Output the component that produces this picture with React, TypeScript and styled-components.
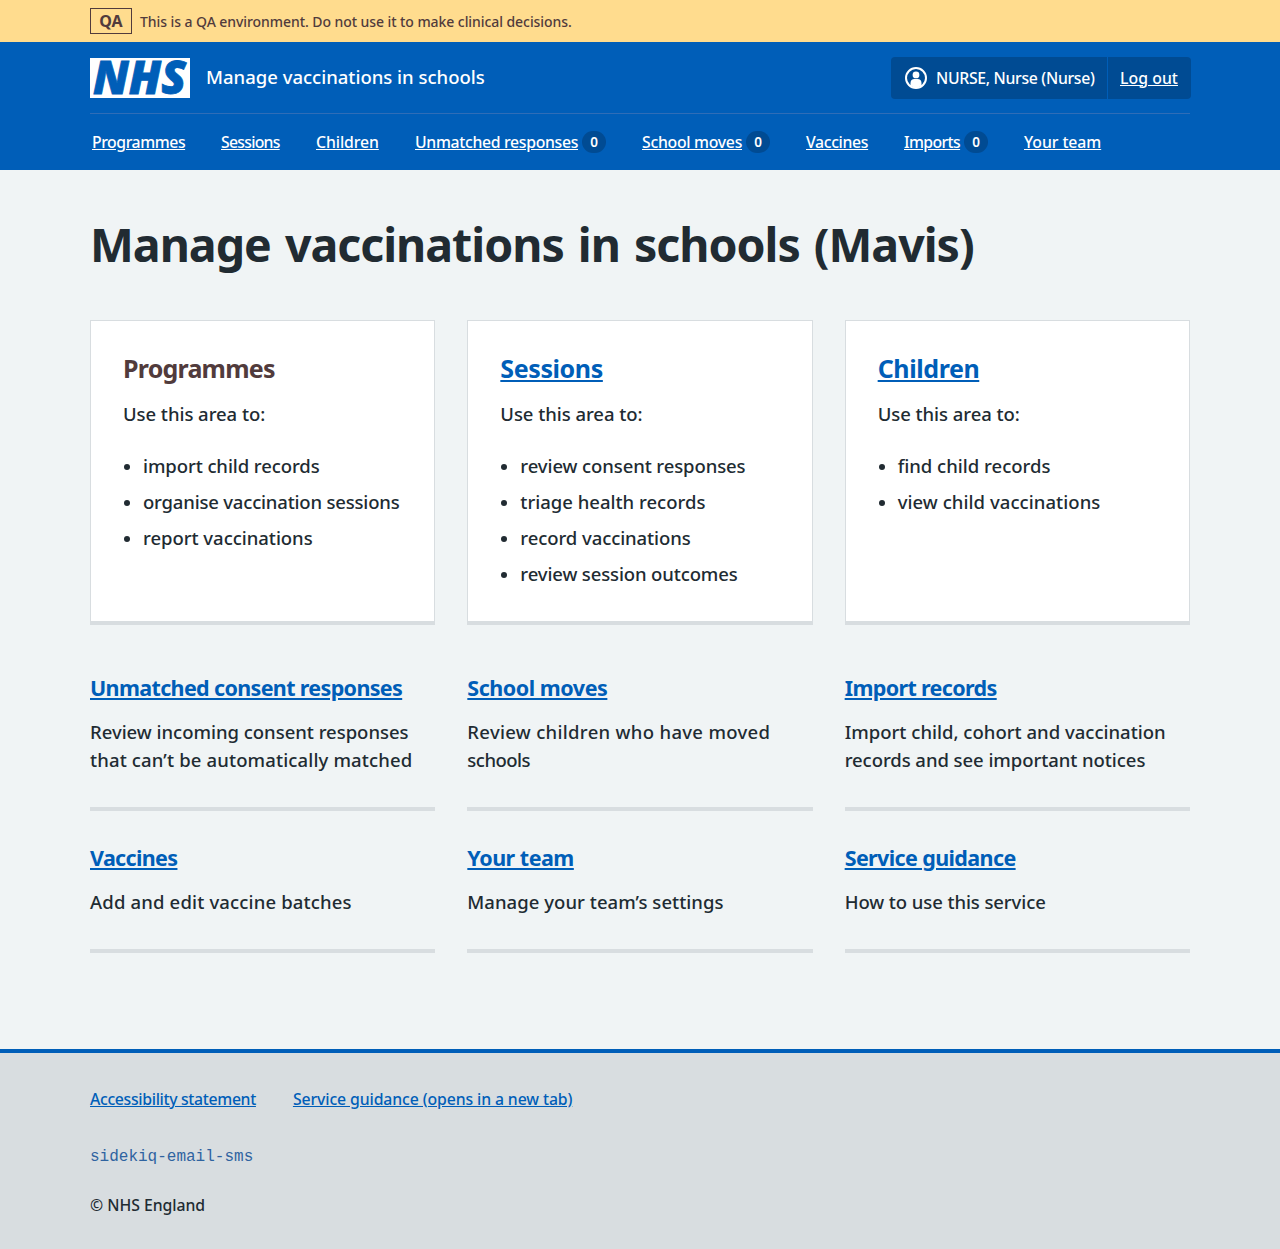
import React from "react";
import styled, { createGlobalStyle } from "styled-components";

const colors = {
  blue: "#005eb8",
  darkBlue: "#004b93",
  text: "#212b32",
  brown: "#513b3c",
  page: "#f0f4f5",
  grey: "#d8dde0",
  amber: "#ffdc8e",
};

const GlobalStyle = createGlobalStyle`
  *, *::before, *::after { box-sizing: border-box; }
  body {
    margin: 0;
    background: ${colors.grey};
    color: ${colors.text};
    font-family: "Noto Sans", "Open Sans", Arial, sans-serif;
    font-size: 18.5px;
    font-weight: 500;
    line-height: 28px;
  }
  h1, h2, p, ul { margin: 0; padding: 0; }
`;

const Container = styled.div`
  width: 1100px;
  margin: 0 auto;
`;

const Spaced = styled.span<{ $ls?: number }>`
  letter-spacing: ${(p) => p.$ls ?? 0}px;
  white-space: nowrap;
`;

const Banner = styled.div`
  height: 42px;
  background: ${colors.amber};
  color: ${colors.brown};
`;

const BannerInner = styled(Container)`
  display: flex;
  align-items: center;
  gap: 8px;
  height: 42px;
  font-size: 14px;
  line-height: 24px;
`;

const BannerText = styled.span`
  padding-top: 2px;
`;

const Tag = styled.strong`
  width: 42px;
  height: 26px;
  border: 1px solid ${colors.brown};
  font-size: 16px;
  font-weight: 700;
  line-height: 24px;
  text-align: center;
`;

const Header = styled.header`
  height: 128px;
  background: ${colors.blue};
  color: #fff;
`;

const HeaderTop = styled(Container)`
  display: flex;
  align-items: center;
  height: 72px;
  border-bottom: 1px solid #2f6db7;
`;

const Logo = styled.svg`
  display: block;
  width: 100px;
  height: 40px;
  overflow: visible;
  background: #fff;
`;

const LogoText = styled.text`
  fill: ${colors.blue};
  stroke: ${colors.blue};
  stroke-width: 0.8px;
  font-family: "Open Sans", "Noto Sans", sans-serif;
  font-size: 46px;
  font-style: italic;
  font-weight: 800;
`;

const ServiceName = styled.span`
  flex: 1;
  margin-left: 16px;
  padding-bottom: 1px;
`;

const Account = styled.div`
  display: flex;
  width: 300px;
  height: 42px;
  margin-right: -1px;
  border-radius: 4px;
  background: ${colors.darkBlue};
  font-size: 15.8px;
  line-height: 42px;
`;

const AccountUser = styled.div`
  display: flex;
  align-items: center;
  gap: 8px;
  width: 217px;
  padding-left: 13px;
  border-right: 1px solid ${colors.blue};
`;

const LogOut = styled.a`
  padding-left: 12px;
  color: #fff;
  text-decoration: underline;
`;

const Nav = styled.nav`
  display: flex;
  align-items: center;
  gap: 36px;
  height: 56px;
  padding-left: 2px;
  font-size: 15.8px;
  line-height: 24px;
`;

const NavItem = styled.div<{ $width: number }>`
  display: flex;
  align-items: center;
  justify-content: space-between;
  width: ${(p) => p.$width}px;
`;

const NavLink = styled.a`
  color: #fff;
  text-decoration: underline;
`;

const Count = styled.span`
  width: 24px;
  height: 22px;
  border-radius: 12px;
  background: ${colors.darkBlue};
  font-size: 13.5px;
  font-weight: 600;
  line-height: 23px;
  text-align: center;
`;

const Main = styled.main`
  height: 879px;
  padding-top: 39px;
  background: ${colors.page};
`;

const PageTitle = styled.h1`
  margin-bottom: 41px;
  font-size: 46.5px;
  font-weight: 700;
  line-height: 70px;
  word-spacing: 3px;
`;

const Grid = styled.div`
  display: grid;
  grid-template-columns: repeat(3, 1fr);
  column-gap: 32px;
  row-gap: 32px;
`;

const CardGrid = styled(Grid)`
  margin-bottom: 48px;
`;

const Card = styled.section`
  height: 305px;
  padding: 32px;
  border: 1px solid ${colors.grey};
  border-bottom-width: 4px;
  background: #fff;
`;

const CardTitle = styled.h2`
  margin-bottom: 16px;
  color: ${colors.brown};
  font-size: 25px;
  font-weight: 700;
  line-height: 31px;
`;

const Link = styled.a`
  color: ${colors.blue};
  text-decoration: underline;
`;

const List = styled.ul`
  margin-top: 24px;
  list-style: none;
`;

const Item = styled.li`
  display: flex;
  align-items: center;
  margin-bottom: 8px;

  &::before {
    content: "";
    width: 6px;
    height: 6px;
    margin: 2px 13px 0 1px;
    border-radius: 50%;
    background: ${colors.text};
  }
`;

const Tile = styled.section`
  padding-bottom: 33px;
  border-bottom: 4px solid ${colors.grey};
`;

const TileTitle = styled.h2`
  margin-bottom: 16px;
  font-size: 21.5px;
  font-weight: 700;
  line-height: 29px;
`;

const Footer = styled.footer`
  height: 200px;
  padding-top: 34px;
  border-top: 4px solid ${colors.blue};
  background: ${colors.grey};
  font-size: 15.8px;
  line-height: 24px;
`;

const FooterLinks = styled.div`
  display: flex;
  gap: 37px;
  margin-bottom: 34px;
`;

const Code = styled.code`
  display: block;
  margin-bottom: 24px;
  color: #2f63a0;
  font-family: "Liberation Mono", monospace;
  font-size: 16px;
  font-weight: 400;
`;

type Line = [string, number];

const navItems: { label: Line; width: number; count?: number }[] = [
  { label: ["Programmes", -0.44], width: 93 },
  { label: ["Sessions", -0.74], width: 59 },
  { label: ["Children", -0.1], width: 63 },
  { label: ["Unmatched responses", -0.32], width: 191, count: 0 },
  { label: ["School moves", -0.28], width: 128, count: 0 },
  { label: ["Vaccines", -0.34], width: 62 },
  { label: ["Imports", -0.62], width: 84, count: 0 },
  { label: ["Your team", -0.08], width: 77 },
];

const cards: { title: Line; plain?: boolean; items: Line[] }[] = [
  {
    title: ["Programmes", -0.78],
    plain: true,
    items: [
      ["import child records", -0.09],
      ["organise vaccination sessions", -0.19],
      ["report vaccinations", -0.03],
    ],
  },
  {
    title: ["Sessions", -0.4],
    items: [
      ["review consent responses", -0.1],
      ["triage health records", 0],
      ["record vaccinations", -0.08],
      ["review session outcomes", -0.13],
    ],
  },
  {
    title: ["Children", -0.41],
    items: [
      ["find child records", 0],
      ["view child vaccinations", 0.06],
    ],
  },
];

const tiles: { title: Line; lines: Line[] }[] = [
  {
    title: ["Unmatched consent responses", -0.65],
    lines: [
      ["Review incoming consent responses", -0.02],
      ["that can’t be automatically matched", 0.14],
    ],
  },
  {
    title: ["School moves", -0.47],
    lines: [
      ["Review children who have moved", 0.31],
      ["schools", -0.5],
    ],
  },
  {
    title: ["Import records", -0.64],
    lines: [
      ["Import child, cohort and vaccination", 0.01],
      ["records and see important notices", -0.06],
    ],
  },
  { title: ["Vaccines", -0.65], lines: [["Add and edit vaccine batches", 0.16]] },
  { title: ["Your team", -0.5], lines: [["Manage your team’s settings", 0.04]] },
  { title: ["Service guidance", -0.62], lines: [["How to use this service", -0.09]] },
];

const UserIcon = () => (
  <svg width="24" height="24" viewBox="0 0 24 24" fill="none">
    <circle cx="12" cy="12" r="10" stroke="#fff" strokeWidth="2" />
    <circle cx="12" cy="8.9" r="3.4" fill="#fff" />
    <path
      d="M6.5 19.5v-2.6c0-2.4 1.6-3.9 3.9-3.9h3.2c2.3 0 3.9 1.5 3.9 3.9v2.6c-1.5 1.2-3.3 1.9-5.5 1.9s-4-.7-5.5-1.9z"
      fill="#fff"
    />
  </svg>
);

export default function App() {
  return (
    <>
      <GlobalStyle />
      <Banner>
        <BannerInner>
          <Tag>QA</Tag>
          <BannerText>
            <Spaced $ls={-0.07}>
              This is a QA environment. Do not use it to make clinical decisions.
            </Spaced>
          </BannerText>
        </BannerInner>
      </Banner>
      <Header>
        <HeaderTop>
          <Logo viewBox="0 0 100 40" aria-label="NHS">
            <LogoText x="3" y="36.3" textLength="93" lengthAdjust="spacingAndGlyphs">
              NHS
            </LogoText>
          </Logo>
          <ServiceName>
            <Spaced $ls={0}>Manage vaccinations in schools</Spaced>
          </ServiceName>
          <Account>
            <AccountUser>
              <UserIcon />
              <Spaced $ls={-0.32}>NURSE, Nurse (Nurse)</Spaced>
            </AccountUser>
            <LogOut>
              <Spaced $ls={0.05}>Log out</Spaced>
            </LogOut>
          </Account>
        </HeaderTop>
        <Container>
          <Nav>
            {navItems.map(({ label, width, count }) => (
              <NavItem key={label[0]} $width={width}>
                <NavLink>
                  <Spaced $ls={label[1]}>{label[0]}</Spaced>
                </NavLink>
                {count !== undefined && <Count>{count}</Count>}
              </NavItem>
            ))}
          </Nav>
        </Container>
      </Header>
      <Main>
        <Container>
          <PageTitle>
            <Spaced $ls={-1.02}>Manage vaccinations in schools (Mavis)</Spaced>
          </PageTitle>
          <CardGrid>
            {cards.map(({ title, plain, items }) => (
              <Card key={title[0]}>
                <CardTitle>
                  <Spaced $ls={title[1]}>
                    {plain ? title[0] : <Link>{title[0]}</Link>}
                  </Spaced>
                </CardTitle>
                <p>
                  <Spaced $ls={-0.05}>Use this area to:</Spaced>
                </p>
                <List>
                  {items.map(([text, ls]) => (
                    <Item key={text}>
                      <Spaced $ls={ls}>{text}</Spaced>
                    </Item>
                  ))}
                </List>
              </Card>
            ))}
          </CardGrid>
          <Grid>
            {tiles.map(({ title, lines }) => (
              <Tile key={title[0]}>
                <TileTitle>
                  <Spaced $ls={title[1]}>
                    <Link>{title[0]}</Link>
                  </Spaced>
                </TileTitle>
                <p>
                  {lines.map(([text, ls]) => (
                    <React.Fragment key={text}>
                      <Spaced $ls={ls}>{text}</Spaced>{" "}
                    </React.Fragment>
                  ))}
                </p>
              </Tile>
            ))}
          </Grid>
        </Container>
      </Main>
      <Footer>
        <Container>
          <FooterLinks>
            <Link>
              <Spaced $ls={-0.33}>Accessibility statement</Spaced>
            </Link>
            <Link>
              <Spaced $ls={-0.11}>Service guidance (opens in a new tab)</Spaced>
            </Link>
          </FooterLinks>
          <Code>sidekiq-email-sms</Code>
          <Spaced $ls={-0.04}>© NHS England</Spaced>
        </Container>
      </Footer>
    </>
  );
}
